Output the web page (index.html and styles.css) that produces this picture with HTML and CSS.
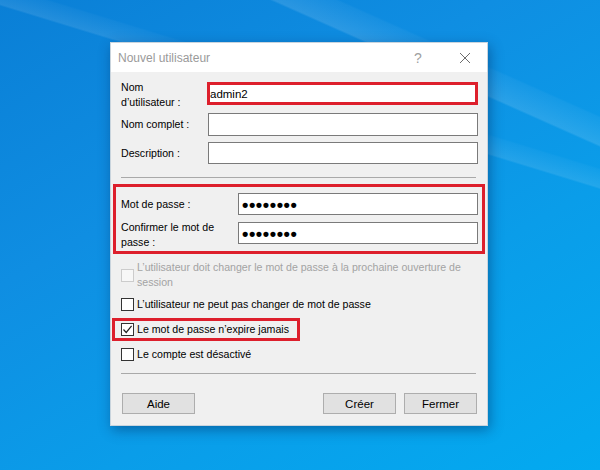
FILE: index.html
```html
<!DOCTYPE html>
<html lang="fr">
<head>
<meta charset="utf-8">
<title>Nouvel utilisateur</title>
<link rel="stylesheet" href="styles.css">
</head>
<body>
<div class="desktop">
  <div class="dialog">
    <div class="titlebar">
      <span class="title">Nouvel utilisateur</span>
      <span class="help">?</span>
      <span class="close">
        <svg width="12" height="12" viewBox="0 0 12 12"><path d="M1 1 L11 11 M11 1 L1 11" stroke="#6d6d6d" stroke-width="1" fill="none"/></svg>
      </span>
    </div>
    <div class="content">
      <div class="row row-user">
        <div class="label label-two">Nom<br>d’utilisateur :</div>
        <div class="field field-red">admin2</div>
      </div>
      <div class="row row-full">
        <div class="label">Nom complet :</div>
        <div class="field"></div>
      </div>
      <div class="row row-desc">
        <div class="label">Description :</div>
        <div class="field"></div>
      </div>
      <div class="sep sep-top"></div>
      <div class="pwgroup">
        <div class="pwrow">
          <div class="label">Mot de passe :</div>
          <div class="field pw"><span class="dots">••••••••</span></div>
        </div>
        <div class="pwrow">
          <div class="label label-confirm">Confirmer le mot de<br>passe :</div>
          <div class="field pw"><span class="dots">••••••••</span></div>
        </div>
      </div>
      <div class="check check-disabled">
        <span class="box"></span>
        <span class="ctext">L’utilisateur doit changer le mot de passe à la prochaine ouverture de<br>session</span>
      </div>
      <div class="check check-2">
        <span class="box"></span>
        <span class="ctext">L’utilisateur ne peut pas changer de mot de passe</span>
      </div>
      <div class="check check-red">
        <span class="box box-checked">
          <svg width="11" height="11" viewBox="0 0 11 11"><path d="M1.5 5.5 L4.2 8.5 L9.6 1.8" stroke="#222" stroke-width="1.2" fill="none"/></svg>
        </span>
        <span class="ctext">Le mot de passe n’expire jamais</span>
      </div>
      <div class="check check-4">
        <span class="box"></span>
        <span class="ctext">Le compte est désactivé</span>
      </div>
      <div class="sep sep-bottom"></div>
      <div class="buttons">
        <div class="btn">Aide</div>
        <div class="spacer"></div>
        <div class="btn">Créer</div>
        <div class="btn">Fermer</div>
      </div>
    </div>
  </div>
</div>
</body>
</html>
```
FILE: styles.css
```css
* { box-sizing: border-box; }
html, body { margin: 0; padding: 0; }
body {
  width: 600px;
  height: 470px;
  overflow: hidden;
  font-family: "Liberation Sans", Arial, sans-serif;
}
.desktop {
  width: 600px;
  height: 470px;
  padding: 42px 0 0 110px;
  background:
    linear-gradient(17deg, transparent 0 71%, rgba(255,255,255,0.10) 71.3%, rgba(255,255,255,0.03) 74%, transparent 74.3%),
    linear-gradient(24deg, transparent 0 80%, rgba(255,255,255,0.12) 80.3%, rgba(255,255,255,0.04) 84%, transparent 84.3%),
    linear-gradient(150deg, #0a7fd6 0%, #0f8ee2 35%, #0a9de9 65%, #03aaf0 100%);
}
.dialog {
  width: 378px;
  height: 384px;
  background: #f0f0f0;
  border: 1px solid #c9d4dd;
  box-shadow: 2px 4px 12px rgba(0, 40, 90, 0.45);
  display: flex;
  flex-direction: column;
}
.titlebar {
  flex: none;
  height: 29px;
  background: #ffffff;
  display: flex;
  align-items: center;
  padding-left: 7px;
  color: #9a9a9a;
  font-size: 12px;
}
.title { flex: 1; }
.help {
  width: 14px;
  text-align: center;
  font-size: 14px;
  color: #a0a0a0;
  margin-right: 34px;
}
.close {
  width: 12px;
  height: 12px;
  margin-right: 16px;
  display: flex;
}
.content {
  padding: 0 9px;
  font-size: 10.6px;
  color: #000;
  display: flex;
  flex-direction: column;
}
.row {
  display: flex;
  align-items: center;
  flex: none;
}
.row .label { width: 88px; flex: none; }
.row .field { flex: 1; }
.row-user { margin-top: 10px; height: 23px; }
.row-full { margin-top: 8px; height: 23px; }
.row-desc { margin-top: 6px; height: 22px; }
.label { line-height: 15px; white-space: nowrap; padding-left: 1px; }
.label-two { align-self: flex-start; margin-top: -2px; }
.field {
  height: 100%;
  background: #fff;
  border: 1px solid #7a7a7a;
  display: flex;
  align-items: center;
  padding-left: 2px;
}
.field-red {
  border: 3px solid #dd1f2c;
  margin-left: -1px;
  padding-left: 0;
  font-size: 11.5px;
}
.sep {
  flex: none;
  height: 1px;
  background: #a9a9a9;
  margin-left: 1px;
  margin-right: 2px;
}
.sep-top { margin-top: 13px; }
.pwgroup {
  flex: none;
  margin: 6px -7px 0 -7px;
  border: 3px solid #dd1f2c;
  padding: 6px 4px 7px 4px;
  display: flex;
  flex-direction: column;
  gap: 7px;
}
.pwrow {
  display: flex;
  align-items: center;
  height: 22px;
}
.pwrow .label { width: 118px; flex: none; }
.pwrow .field { flex: 1; }
.label-confirm { margin-top: 3px; }
.pw { padding-left: 3px; }
.dots {
  font-size: 13px;
  font-weight: bold;
  letter-spacing: 0.4px;
  transform: scale(1.4);
  transform-origin: left center;
  display: inline-block;
}
.check {
  flex: none;
  display: flex;
  align-items: center;
  line-height: 15px;
  padding-left: 1px;
  white-space: nowrap;
}
.box {
  width: 13px;
  height: 13px;
  border: 1px solid #333;
  background: #fff;
  flex: none;
  margin-right: 3px;
  display: flex;
  align-items: center;
  justify-content: center;
}
.check-disabled { margin-top: 6px; color: #a3a3a3; }
.check-disabled .box { border-color: #cccccc; background: #f7f7f7; }
.check-2 { margin-top: 7px; }
.check-red {
  align-self: flex-start;
  margin-top: 6px;
  margin-left: -8px;
  border: 3px solid #dd1f2c;
  padding: 1px 8px 1px 6px;
  height: 23px;
}
.check-4 { margin-top: 6px; }
.sep-bottom { margin-top: 11px; }
.buttons {
  flex: none;
  display: flex;
  margin-top: 19px;
  gap: 8px;
  padding-left: 2px;
  padding-right: 1px;
}
.spacer { flex: 1; }
.btn {
  width: 73px;
  height: 21px;
  background: #e1e1e1;
  border: 1px solid #adadad;
  display: flex;
  align-items: center;
  justify-content: center;
  font-size: 11.5px;
}
```
